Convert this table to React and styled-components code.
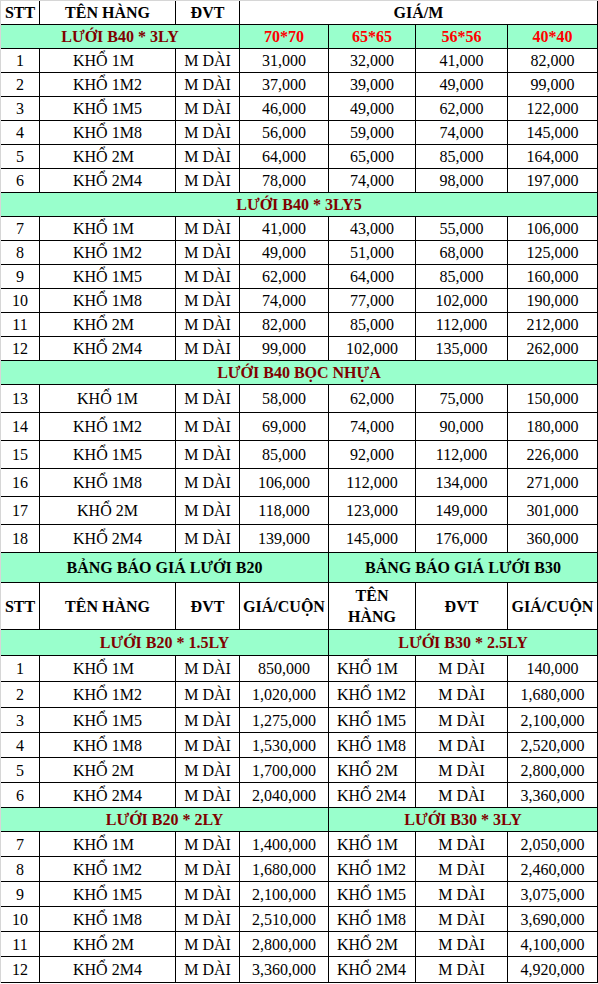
import React from "react";
import styled, { createGlobalStyle } from "styled-components";

const MINT = "#99ffcc";

const Global = createGlobalStyle`
  body {
    margin: 0;
    background: #fff;
  }
`;

const b40 = [
  {
    title: "LƯỚI B40 * 3LY",
    h: 24,
    indent: true,
    rows: [
      [1, "KHỔ 1M", "31,000", "32,000", "41,000", "82,000"],
      [2, "KHỔ 1M2", "37,000", "39,000", "49,000", "99,000"],
      [3, "KHỔ 1M5", "46,000", "49,000", "62,000", "122,000"],
      [4, "KHỔ 1M8", "56,000", "59,000", "74,000", "145,000"],
      [5, "KHỔ 2M", "64,000", "65,000", "85,000", "164,000"],
      [6, "KHỔ 2M4", "78,000", "74,000", "98,000", "197,000"],
    ],
  },
  {
    title: "LƯỚI B40 * 3LY5",
    h: 24,
    indent: true,
    rows: [
      [7, "KHỔ 1M", "41,000", "43,000", "55,000", "106,000"],
      [8, "KHỔ 1M2", "49,000", "51,000", "68,000", "125,000"],
      [9, "KHỔ 1M5", "62,000", "64,000", "85,000", "160,000"],
      [10, "KHỔ 1M8", "74,000", "77,000", "102,000", "190,000"],
      [11, "KHỔ 2M", "82,000", "85,000", "112,000", "212,000"],
      [12, "KHỔ 2M4", "99,000", "102,000", "135,000", "262,000"],
    ],
  },
  {
    title: "LƯỚI B40 BỌC NHỰA",
    h: 28,
    indent: false,
    rows: [
      [13, "KHỔ 1M", "58,000", "62,000", "75,000", "150,000"],
      [14, "KHỔ 1M2", "69,000", "74,000", "90,000", "180,000"],
      [15, "KHỔ 1M5", "85,000", "92,000", "112,000", "226,000"],
      [16, "KHỔ 1M8", "106,000", "112,000", "134,000", "271,000"],
      [17, "KHỔ 2M", "118,000", "123,000", "149,000", "301,000"],
      [18, "KHỔ 2M4", "139,000", "145,000", "176,000", "360,000"],
    ],
  },
];

const sizes = ["70*70", "65*65", "56*56", "40*40"];

const rolls = [
  {
    left: "LƯỚI B20 * 1.5LY",
    right: "LƯỚI B30 * 2.5LY",
    h: 26,
    heights: [26, 26, 25, 25, 25, 25],
    rows: [
      [1, "KHỔ 1M", "850,000", "140,000"],
      [2, "KHỔ 1M2", "1,020,000", "1,680,000"],
      [3, "KHỔ 1M5", "1,275,000", "2,100,000"],
      [4, "KHỔ 1M8", "1,530,000", "2,520,000"],
      [5, "KHỔ 2M", "1,700,000", "2,800,000"],
      [6, "KHỔ 2M4", "2,040,000", "3,360,000"],
    ],
  },
  {
    left: "LƯỚI B20 * 2LY",
    right: "LƯỚI B30 * 3LY",
    h: 24,
    heights: [25, 25, 25, 25, 25, 26],
    rows: [
      [7, "KHỔ 1M", "1,400,000", "2,050,000"],
      [8, "KHỔ 1M2", "1,680,000", "2,460,000"],
      [9, "KHỔ 1M5", "2,100,000", "3,075,000"],
      [10, "KHỔ 1M8", "2,510,000", "3,690,000"],
      [11, "KHỔ 2M", "2,800,000", "4,100,000"],
      [12, "KHỔ 2M4", "3,360,000", "4,920,000"],
    ],
  },
];

const App = () => (
  <>
    <Global />
    <Sheet>
      <Row $h={24}>
        <Head>STT</Head>
        <Head>TÊN HÀNG</Head>
        <Head>ĐVT</Head>
        <Head $span={4}>GIÁ/M</Head>
      </Row>

      {b40.map((group, gi) => (
        <React.Fragment key={group.title}>
          <Row $h={24}>
            {gi === 0 ? (
              <>
                <Group $span={3}>{group.title}</Group>
                {sizes.map(s => <Size key={s}>{s}</Size>)}
              </>
            ) : (
              <Group $span={7}>{group.title}</Group>
            )}
          </Row>
          {group.rows.map(([no, name, ...prices]) => (
            <Row $h={group.h} key={no}>
              <Data>{no}</Data>
              <Data $indent={group.indent ? 33 : 0}>{name}</Data>
              <Data>M DÀI</Data>
              {prices.map((p, i) => <Data key={i}>{p}</Data>)}
            </Row>
          ))}
        </React.Fragment>
      ))}

      <Row $h={30}>
        <Title $span={4}>BẢNG BÁO GIÁ LƯỚI B20</Title>
        <Title $span={3}>BẢNG BÁO GIÁ LƯỚI B30</Title>
      </Row>
      <Row $h={47}>
        <Head>STT</Head>
        <Head>TÊN HÀNG</Head>
        <Head>ĐVT</Head>
        <Head>GIÁ/CUỘN</Head>
        <Head>TÊN<br />HÀNG</Head>
        <Head>ĐVT</Head>
        <Head>GIÁ/CUỘN</Head>
      </Row>

      {rolls.map(group => (
        <React.Fragment key={group.left}>
          <Row $h={group.h}>
            <Group $span={4}>{group.left}</Group>
            <Group $span={3}>{group.right}</Group>
          </Row>
          {group.rows.map(([no, name, b20, b30], i) => (
            <Row $h={group.heights[i]} key={no}>
              <Data>{no}</Data>
              <Data $indent={33}>{name}</Data>
              <Data>M DÀI</Data>
              <Data>{b20}</Data>
              <Data $indent={8}>{name}</Data>
              <Data>M DÀI</Data>
              <Data>{b30}</Data>
            </Row>
          ))}
        </React.Fragment>
      ))}
    </Sheet>
  </>
);

export default App;

const Sheet = styled.div`
  display: grid;
  grid-template-columns: 39px 136px 64px 89px 87px 92px 90px;
  width: max-content;
  border-top: 1px solid #d6d6d6;
  border-left: 1px solid #d6d6d6;
  font-family: "Liberation Serif", "Times New Roman", serif;
  font-size: 16px;
  color: #000;
`;

const Row = styled.div`
  display: contents;
  --h: ${p => p.$h}px;
`;

const Cell = styled.div`
  grid-column: span ${p => p.$span || 1};
  height: var(--h);
  box-sizing: border-box;
  border-right: 1px solid #000;
  border-bottom: 1px solid #000;
  display: flex;
  align-items: center;
  justify-content: center;
  text-align: center;
  line-height: 21px;
  white-space: nowrap;
  background: #fff;
`;

const Head = styled(Cell)`
  font-weight: 700;
`;

const Group = styled(Cell)`
  background: ${MINT};
  color: #800000;
  font-weight: 700;
`;

const Size = styled(Cell)`
  background: ${MINT};
  color: #ff0000;
  font-weight: 700;
`;

const Title = styled(Cell)`
  background: ${MINT};
  font-weight: 700;
`;

const Data = styled(Cell)`
  justify-content: ${p => (p.$indent ? "flex-start" : "center")};
  padding-left: ${p => p.$indent || 0}px;
`;
